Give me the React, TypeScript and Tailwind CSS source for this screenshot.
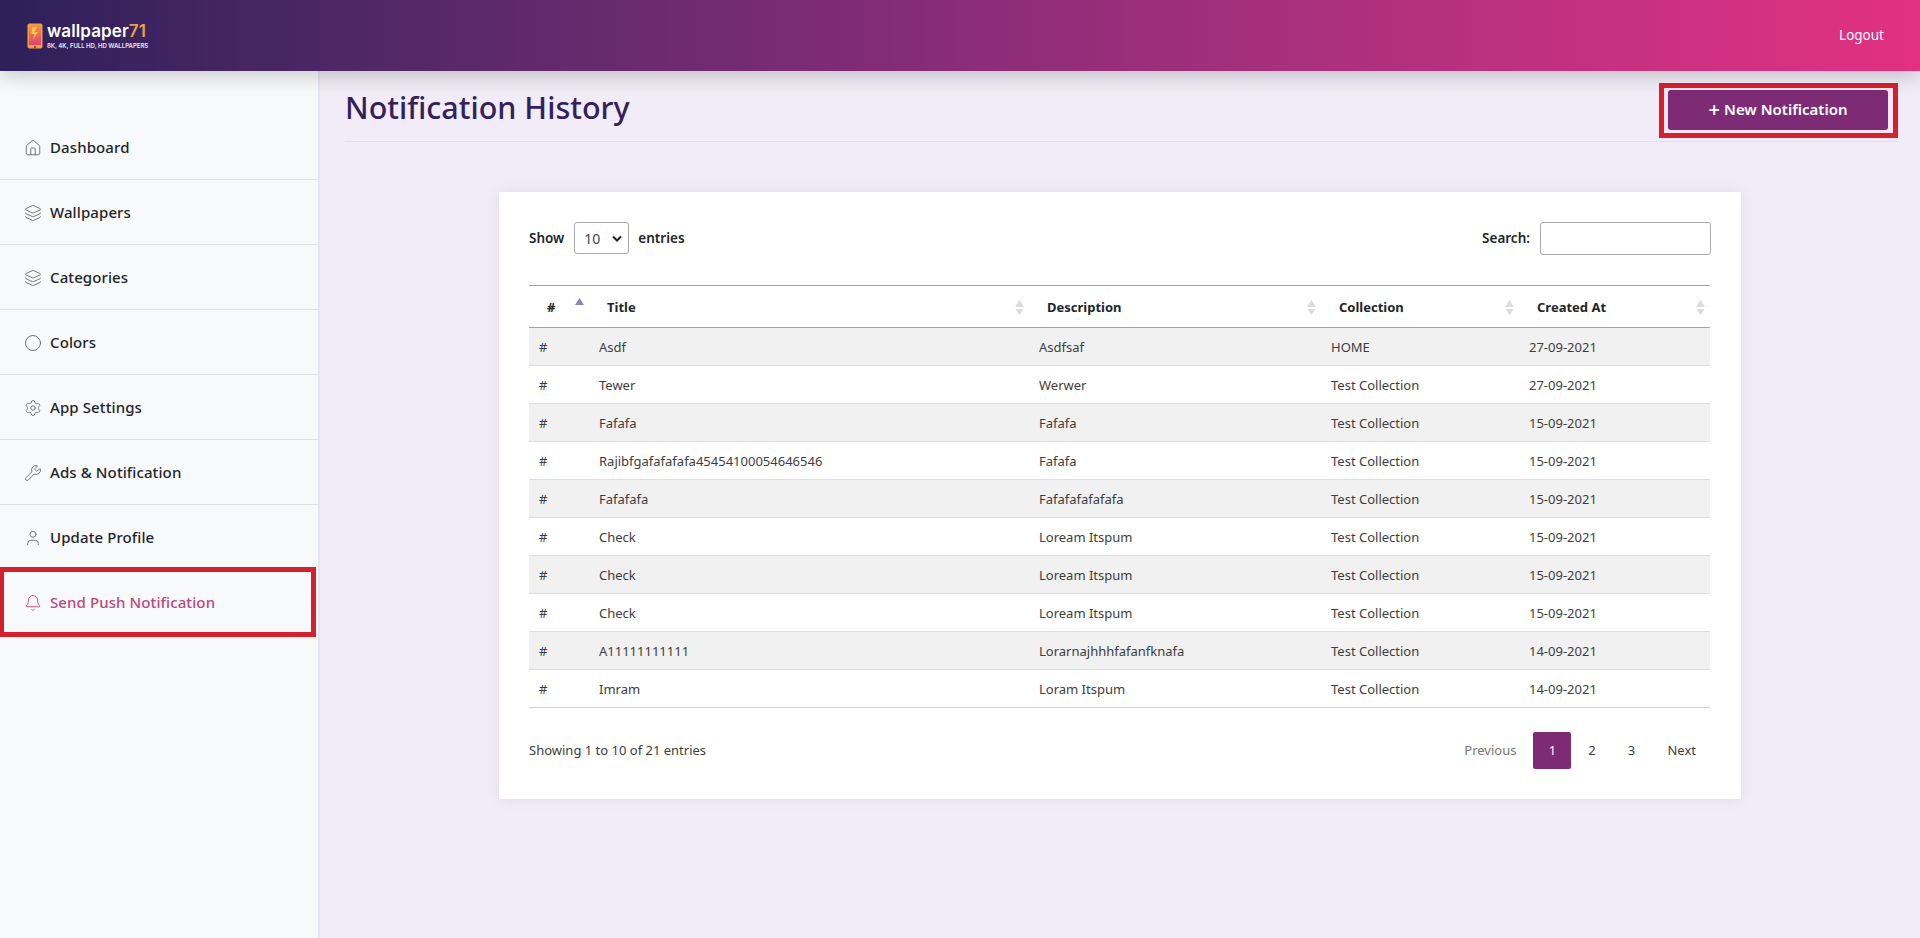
import React from "react";
import { Home, Layers, Circle, Settings, Wrench, User, Bell } from "lucide-react";

const nav = [
  { label: "Dashboard", Icon: Home },
  { label: "Wallpapers", Icon: Layers },
  { label: "Categories", Icon: Layers },
  { label: "Colors", Icon: Circle },
  { label: "App Settings", Icon: Settings },
  { label: "Ads & Notification", Icon: Wrench },
  { label: "Update Profile", Icon: User },
];

const rows = [
  ["Asdf", "Asdfsaf", "HOME", "27-09-2021"],
  ["Tewer", "Werwer", "Test Collection", "27-09-2021"],
  ["Fafafa", "Fafafa", "Test Collection", "15-09-2021"],
  ["Rajibfgafafafafa45454100054646546", "Fafafa", "Test Collection", "15-09-2021"],
  ["Fafafafa", "Fafafafafafafa", "Test Collection", "15-09-2021"],
  ["Check", "Loream Itspum", "Test Collection", "15-09-2021"],
  ["Check", "Loream Itspum", "Test Collection", "15-09-2021"],
  ["Check", "Loream Itspum", "Test Collection", "15-09-2021"],
  ["A11111111111", "Lorarnajhhhfafanfknafa", "Test Collection", "14-09-2021"],
  ["Imram", "Loram Itspum", "Test Collection", "14-09-2021"],
];

function Sort({ active }: { active?: boolean }) {
  return (
    <svg width="9" height="15" viewBox="0 0 9 15" className={active ? "mb-[4px] shrink-0" : "shrink-0"}>
      <path d="M4.5 0 L9 7 H0 Z" fill={active ? "#8583cc" : "#dcdcdc"} />
      {!active && <path d="M4.5 15 L8.5 9 H0.5 Z" fill="#dcdcdc" />}
    </svg>
  );
}

function Logo() {
  return (
    <div className="flex items-center gap-[4px]">
      <svg width="16" height="26" viewBox="0 0 16 26">
        <defs>
          <linearGradient id="ph" x1="0" y1="0" x2="0" y2="1">
            <stop offset="0" stopColor="#f0993f" />
            <stop offset="1" stopColor="#e0406f" />
          </linearGradient>
        </defs>
        <rect x="0.5" y="0.5" width="15" height="25" rx="2" fill="#f0a040" />
        <rect x="2" y="2" width="12" height="20" fill="url(#ph)" />
        <path d="M5 4 L10 4 L7.5 9 L11 9 L6 17 L7.5 11 L4.5 11 Z" fill="#f7c24a" />
        <circle cx="8" cy="24" r="1" fill="#7a2a20" />
      </svg>
      <div className="flex flex-col">
        <div className="text-[17px] leading-[18px] font-semibold text-white font-['Inter',sans-serif] tracking-[0.1px]">
          wallpaper<span className="text-[#e8a04a]">71</span>
        </div>
        <div className="text-[6px] leading-[7px] mt-[2px] font-semibold text-[#f0e6f5] font-['Inter',sans-serif] whitespace-nowrap">
          8K, 4K, FULL HD, HD WALLPAPERS
        </div>
      </div>
    </div>
  );
}

export default function App() {
  return (
    <div className="h-screen flex flex-col overflow-hidden bg-[#f1ecf7] font-['Noto_Sans',sans-serif] text-[#212529]">
      <header className="relative z-10 h-[71px] shrink-0 flex items-center justify-between pl-[27px] pr-[36px] bg-gradient-to-r from-[#2e205a] via-[#8a2c78] to-[#e33083] shadow-[0_6px_18px_rgba(0,0,0,0.18)]">
        <Logo />
        <a className="text-[13.5px] text-white">Logout</a>
      </header>
      <div className="flex flex-1 min-h-0">
        <aside className="w-[320px] shrink-0 bg-[#f8f9fb] border-r-2 border-[#e8e4ef] pt-[44px]">
          {nav.map(({ label, Icon }) => (
            <div key={label} className="h-[65px] flex items-center gap-[8px] pl-[24px] border-b border-[#dee1e6]">
              <Icon size={18} strokeWidth={1.2} className="text-[#666] mt-[1px]" />
              <span className="text-[15px] font-medium tracking-[0.1px]">{label}</span>
            </div>
          ))}
          <div className="relative h-[65px] flex items-center gap-[8px] pl-[24px] border-b border-[#dee1e6]">
            <Bell size={18} strokeWidth={1.2} className="text-[#c0447f] mt-[1px]" />
            <span className="text-[15px] font-medium tracking-[0.1px] text-[#b9477f]">Send Push Notification</span>
            <div className="absolute left-0 right-[2px] -top-[3px] -bottom-[3px] border-[5px] border-l-[4px] border-[#d3212e]" />
          </div>
        </aside>
        <main className="flex-1 min-w-0 pl-[25px] pr-[22px]">
          <div className="h-[71px] flex items-center justify-between border-b border-[#e4deec]">
            <h1 className="text-[30.5px] leading-none font-medium text-[#33215c] mt-[3px]">Notification History</h1>
            <div className="border-[5px] border-[#d3212e] w-[239px] h-[55px] pt-[2px] pb-[3px] pl-[4px] pr-[5px] mt-[8px] bg-[#f9e6ef]">
              <button className="w-full h-full rounded-[3px] bg-[#7e2b76] text-white text-[15px] font-semibold flex items-center justify-center gap-[4px]">
                <span className="text-[20px] leading-none">+</span>New Notification
              </button>
            </div>
          </div>
          <div className="w-[1242px] h-[607px] mt-[50px] ml-[154px] bg-white shadow-[0_0_14px_rgba(0,0,0,0.07)] px-[30px] pt-[30px]">
            <div className="flex items-center justify-between h-[32px] text-[13.5px]">
              <div className="flex items-center gap-[9px] font-semibold">
                <span className="pt-[1px] pr-[1px]">Show</span>
                <div className="w-[55px] h-[32px] border border-[#a9a9a9] rounded-[3px] flex items-center justify-between pl-[9px] pr-[6px] font-normal text-[14px] text-[#444]">
                  10
                  <svg width="10" height="7" viewBox="0 0 10 7"><path d="M1 1.5 L5 5.5 L9 1.5" fill="none" stroke="#222" strokeWidth="2" /></svg>
                </div>
                <span className="pt-[1px]">entries</span>
              </div>
              <div className="flex items-center gap-[10px] font-semibold">
                <span className="pt-[1px]">Search:</span>
                <div className="w-[171px] h-[33px] border border-[#a9a9a9] rounded-[3px]" />
              </div>
            </div>
            <table className="w-[1181px] table-fixed border-collapse mt-[31px] text-[13px]">
              <thead>
                <tr className="h-[42px] border-y border-[#a3a3a3]">
                  <th className="w-[60px] pl-[18px] pr-[5px] pt-[2px] font-bold"><div className="flex items-center justify-between"><span>#</span><Sort active /></div></th>
                  <th className="w-[440px] pl-[18px] pr-[5px] pt-[2px] font-bold text-left"><div className="flex items-center justify-between"><span>Title</span><Sort /></div></th>
                  <th className="w-[292px] pl-[18px] pr-[5px] pt-[2px] font-bold text-left"><div className="flex items-center justify-between"><span>Description</span><Sort /></div></th>
                  <th className="w-[198px] pl-[18px] pr-[5px] pt-[2px] font-bold text-left"><div className="flex items-center justify-between"><span>Collection</span><Sort /></div></th>
                  <th className="w-[191px] pl-[18px] pr-[5px] pt-[2px] font-bold text-left"><div className="flex items-center justify-between"><span>Created At</span><Sort /></div></th>
                </tr>
              </thead>
              <tbody className="text-[#3d3d3d]">
                {rows.map((r, i) => (
                  <tr key={i} className={`h-[38px] border-b ${i === 9 ? "border-[#cfcfcf]" : "border-[#dedede]"} ${i % 2 === 0 ? "bg-[#f1f1f1]" : "bg-white"}`}>
                    <td className="pl-[10px] pt-[2px]">#</td>
                    {r.map((c, j) => (
                      <td key={j} className="pl-[10px] pt-[2px]">{c}</td>
                    ))}
                  </tr>
                ))}
              </tbody>
            </table>
            <div className="flex items-center justify-between mt-[24px] text-[13px] text-[#3d3d3d]">
              <span>Showing 1 to 10 of 21 entries</span>
              <div className="flex items-center pr-[15px]">
                <span className="text-[#777] pr-[17px]">Previous</span>
                <span className="w-[38px] h-[37px] flex items-center justify-center rounded-[2px] bg-[#7e2b76] text-white">1</span>
                <span className="w-[40px] text-center pl-[1px]">2</span>
                <span className="w-[40px] text-center">3</span>
                <span className="pl-[16px]">Next</span>
              </div>
            </div>
          </div>
        </main>
      </div>
    </div>
  );
}
